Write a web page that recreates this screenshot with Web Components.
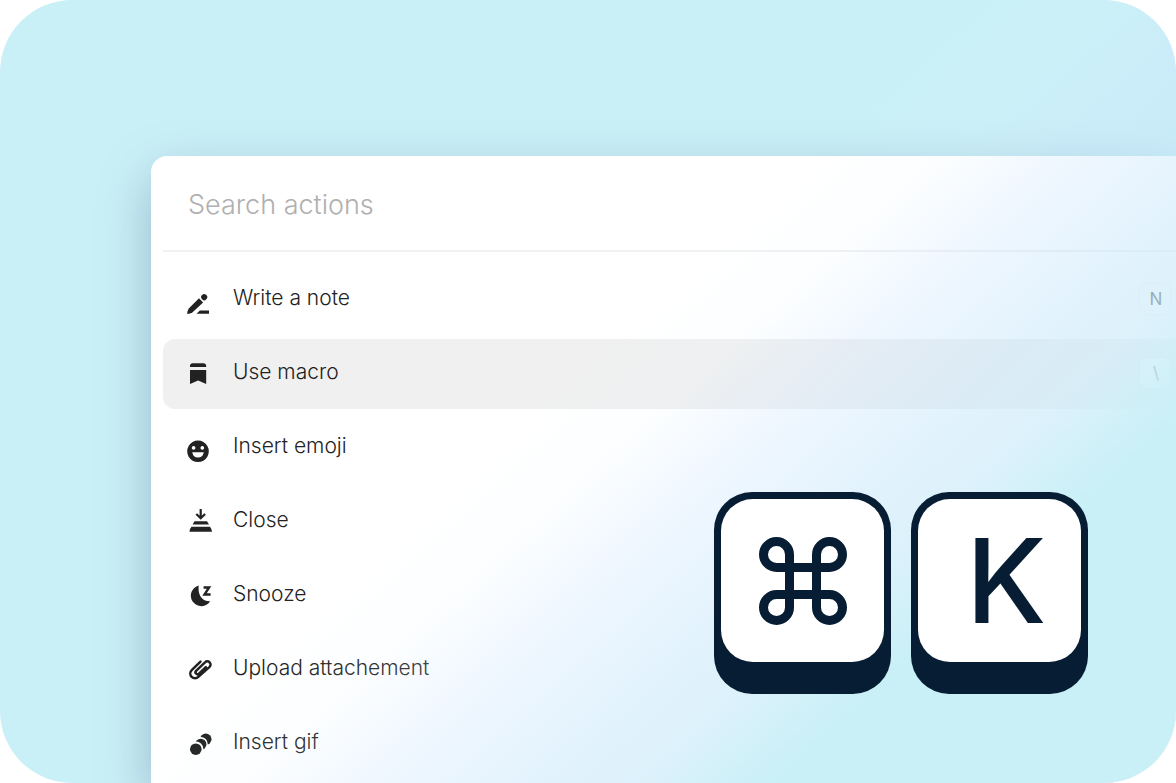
<!DOCTYPE html>
<html lang="en">
<head>
<meta charset="utf-8">
<meta name="viewport" content="width=device-width, initial-scale=1">
<title>Command palette</title>
<style>
  body { margin: 0; background: #fff; font-family: Inter, "Liberation Sans", sans-serif; color: #222; }
</style>
</head>
<body>
<hero-stage>
  <command-palette placeholder="Search actions">
    <palette-action icon="note" shortcut="N">Write a note</palette-action>
    <palette-action icon="macro" shortcut="\" active>Use macro</palette-action>
    <palette-action icon="emoji">Insert emoji</palette-action>
    <palette-action icon="close">Close</palette-action>
    <palette-action icon="snooze">Snooze</palette-action>
    <palette-action icon="clip">Upload attachement</palette-action>
    <palette-action icon="gif">Insert gif</palette-action>
  </command-palette>
  <key-cap slot="keys"><svg width="88" height="88" viewBox="0 0 88 88" fill="none" stroke="#071d33" stroke-width="9" role="img" aria-label="Command"><path d="M30.500 30.500H17.500A13 13 0 1 1 30.500 17.500V70.500A13 13 0 1 1 17.500 57.500H70.500A13 13 0 1 1 57.500 70.500V17.500A13 13 0 1 1 70.500 30.500Z"/></svg></key-cap>
  <key-cap slot="keys" letter>K</key-cap>
</hero-stage>

<script>
const define = (name, html, setup) => {
  const template = document.createElement('template');
  template.innerHTML = html;
  customElements.define(name, class extends HTMLElement {
    connectedCallback() {
      if (this.shadowRoot) return;
      this.attachShadow({ mode: 'open' }).append(template.content.cloneNode(true));
      if (setup) setup(this, this.shadowRoot);
    }
  });
};

define('hero-stage', `
  <style>
    :host { display: flex; flex-direction: column; position: relative; box-sizing: border-box;
      min-height: 100vh; padding: 156px 0 0 151px; overflow: hidden; border-radius: 72px;
      background: #caf0f7; }
    .content { display: flex; flex: 1; flex-direction: column; }
    .fade { position: absolute; inset: 0; pointer-events: none;
      background: linear-gradient(138deg, rgba(215,238,252,0) 48%, rgba(215,238,252,.09) 55%,
        rgba(203,228,255,.28) 60%, rgba(198,230,251,.48) 68%, rgba(206,236,249,.72) 74%, #caf0f7 80%); }
    .keys { position: absolute; right: 88px; bottom: 89px; display: flex; gap: 20px; }
  </style>
  <div class="content"><slot></slot></div>
  <div class="fade"></div>
  <div class="keys"><slot name="keys"></slot></div>`);

define('command-palette', `
  <style>
    :host { display: flex; flex: 1; flex-direction: column; padding-left: 12px;
      border-radius: 16px 0 0 0; background: #fff; box-shadow: 0 20px 52px rgba(70,95,135,.38); }
    input { height: 96px; box-sizing: border-box; padding: 2px 25px 0; border: 0; width: 100%;
      border-bottom: 2px solid #f0f1f2; background: none; outline: none; color: #222;
      font: 300 27px Inter, "Liberation Sans", sans-serif; }
    input::placeholder { color: #b0b0b0; opacity: 1; }
    .list { display: flex; flex-direction: column; gap: 4px; padding: 13px 0 4px; }
  </style>
  <input type="text" aria-label="Search actions">
  <div class="list"><slot></slot></div>`,
  (host, root) => { root.querySelector('input').placeholder = host.getAttribute('placeholder'); });

define('palette-action', `
  <style>
    :host { display: block; }
    button { display: flex; align-items: flex-start; gap: 19px; width: 100%; height: 70px;
      padding: 17px 6px 0 23px; border: 0; border-radius: 12px 0 0 12px; background: none;
      color: inherit; font: 300 21px/32px Inter, "Liberation Sans", sans-serif; text-align: left; }
    :host([active]) button { background: #f0f0f0; }
    palette-icon { margin-top: 3px; }
    .label { flex: 1; }
    kbd { box-sizing: border-box; width: 30px; height: 30px; margin-top: 2px; padding-left: 2px; border-radius: 6px;
      background: #fff; box-shadow: 0 0 3px rgba(0,0,0,.1); color: #333;
      font: 400 17px/30px Inter, "Liberation Sans", sans-serif; text-align: center; }
  </style>
  <button type="button"><palette-icon></palette-icon><span class="label"><slot></slot></span></button>`,
  (host, root) => {
    root.querySelector('palette-icon').setAttribute('name', host.getAttribute('icon'));
    const shortcut = host.getAttribute('shortcut');
    if (shortcut) {
      const kbd = document.createElement('kbd');
      kbd.textContent = shortcut;
      root.querySelector('button').append(kbd);
    }
  });

const ICONS = {
  note: '<rect x="15.200" y="9.200" width="6" height="6" rx="2.600" transform="rotate(45 18.200 12.200)"/><path d="M13 13.300L17.100 17.400L6.600 27.200Q4.400 28.800 1.200 28.900Q1.200 25.600 3 23.300Z"/><path d="M10.500 28.800L13.900 25.400H23V28.800Z"/>',
  macro: '<path d="M4 8V7Q4 4.300 6.800 4.300H17.400Q20 4.300 20.200 7V8Z"/><path d="M4 11H20.200V25L12.100 21.500L4 25Z"/>',
  emoji: '<path fill-rule="evenodd" d="M12 7.500a10.800 10.800 0 1 0 .01 0ZM7.600 13.100a1.800 1.800 0 1 1-.01 0ZM16.300 13.100a1.800 1.800 0 1 1-.01 0ZM6.200 19.300H17.800Q16.800 24.500 12 24.500T6.200 19.300Z"/>',
  close: '<path d="M14.700 2V11M10.300 7L14.700 11.300L19.100 7" fill="none" stroke="#222" stroke-width="2.200"/><path d="M8.500 14.200H21L23 17.400H6.600ZM5.500 19.700H24Q25.600 21.500 26 24.800H3.400Q3.800 21.500 5.500 19.700Z"/>',
  snooze: '<path d="M12.700 4.500A10.500 10.500 0 1 0 24.200 20.300C17.500 20.800 11.500 16 12.700 4.500Z"/><path d="M17.600 6.600H23L18.600 13.400H24.600" fill="none" stroke="#222" stroke-width="2.500"/>',
  clip: '<path d="M14.500 6.700L5.700 15.200A4.700 4.700 0 0 0 12.300 21.900L23.600 11.900A3.200 3.200 0 0 0 19 7.300L10.100 15.800A2 2 0 0 0 13 18.600L19.800 12.100" fill="none" stroke="#222" stroke-width="2.500" stroke-linecap="round"/>',
  gif: '<mask id="near"><rect width="28" height="32" fill="#fff"/><circle cx="10" cy="20" r="7.400" fill="#000"/></mask><mask id="mid"><rect width="28" height="32" fill="#fff"/><circle cx="14.600" cy="15.200" r="7.200" fill="#000"/></mask><circle cx="9.800" cy="20.200" r="5.800"/><circle cx="14.800" cy="15.300" r="5.600" mask="url(#near)"/><circle cx="19.800" cy="10.200" r="5.700" mask="url(#mid)"/>'
};

define('palette-icon', `
  <style>
    :host { display: block; width: 28px; height: 32px; }
    svg { display: block; fill: #222; }
  </style>
  <svg width="28" height="32" viewBox="0 0 28 32" aria-hidden="true"></svg>`,
  (host, root) => { root.querySelector('svg').innerHTML = ICONS[host.getAttribute('name')]; });

define('key-cap', `
  <style>
    :host { display: block; padding: 7px 7px 32px; border-radius: 38px; background: #071d33; }
    kbd { display: flex; box-sizing: border-box; align-items: center; justify-content: center;
      width: 163px; height: 163px; border-radius: 32px; background: #fff; color: #071d33;
      font: 500 117px/163px Inter, "Liberation Sans", sans-serif; }
    :host([letter]) kbd { justify-content: flex-start; padding-left: 48px; }
  </style>
  <kbd><slot></slot></kbd>`);
</script>
</body>
</html>
